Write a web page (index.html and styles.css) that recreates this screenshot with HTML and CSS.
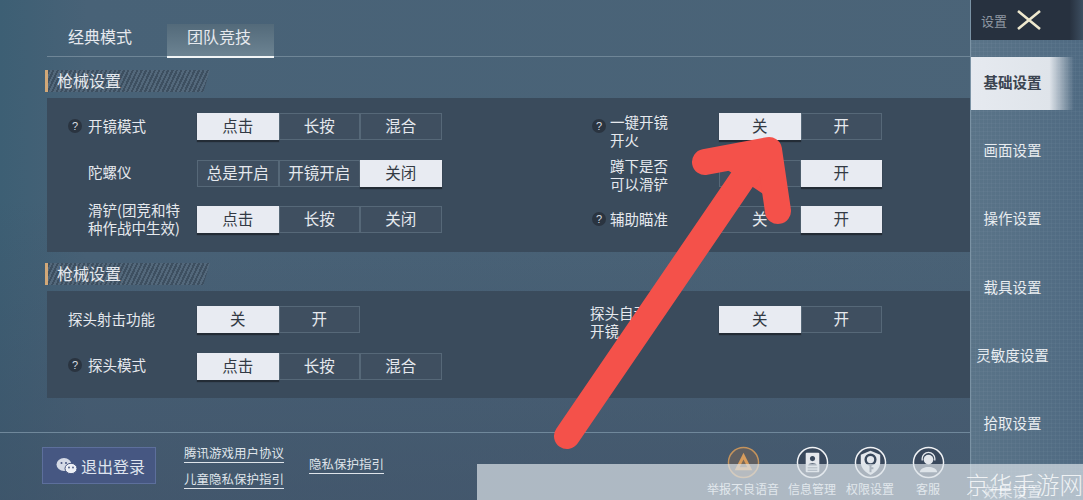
FILE: index.html
```html
<!DOCTYPE html>
<html lang="zh-CN">
<head>
  <meta charset="UTF-8">
  <title>设置</title>
  <link rel="stylesheet" href="styles.css">
</head>
<body>
<div class="screen">
  <div class="main">
    <div class="tabs">
      <div class="tab">经典模式</div>
      <div class="tab active">团队竞技</div>
    </div>

    <div class="section-title">枪械设置</div>
    <div class="panel first">
      <div class="col">
        <div class="row">
          <div class="label"><span class="help">?</span>开镜模式</div>
          <div class="seg"><span class="on">点击</span><span>长按</span><span>混合</span></div>
        </div>
        <div class="row">
          <div class="label"><span class="help blank"></span>陀螺仪</div>
          <div class="seg"><span>总是开启</span><span>开镜开启</span><span class="on">关闭</span></div>
        </div>
        <div class="row">
          <div class="label"><span class="help blank"></span><span>滑铲(团竞和特<br>种作战中生效)</span></div>
          <div class="seg"><span class="on">点击</span><span>长按</span><span>关闭</span></div>
        </div>
      </div>
      <div class="col right">
        <div class="row">
          <div class="label"><span class="help">?</span><span class="low">一键开镜<br>开火</span></div>
          <div class="seg"><span class="on">关</span><span>开</span></div>
        </div>
        <div class="row">
          <div class="label"><span class="help blank"></span><span class="lower">蹲下是否<br>可以滑铲</span></div>
          <div class="seg"><span>关</span><span class="on">开</span></div>
        </div>
        <div class="row">
          <div class="label"><span class="help">?</span>辅助瞄准</div>
          <div class="seg"><span>关</span><span class="on">开</span></div>
        </div>
      </div>
    </div>

    <div class="section-title second">枪械设置</div>
    <div class="panel">
      <div class="col">
        <div class="row">
          <div class="label">探头射击功能</div>
          <div class="seg"><span class="on">关</span><span>开</span></div>
        </div>
        <div class="row">
          <div class="label"><span class="help">?</span>探头模式</div>
          <div class="seg"><span class="on">点击</span><span>长按</span><span>混合</span></div>
        </div>
      </div>
      <div class="col right">
        <div class="row">
          <div class="label flush"><span class="lower">探头自动<br>开镜</span></div>
          <div class="seg"><span class="on">关</span><span>开</span></div>
        </div>
      </div>
    </div>

    <div class="footer">
      <div class="logout">
        <svg class="wechat" viewBox="0 0 22 18">
          <ellipse cx="8" cy="7.5" rx="7.5" ry="6.5" fill="#d5dae6"/>
          <ellipse cx="15" cy="11.5" rx="6" ry="5.2" fill="#eef0f5" stroke="#46557f"/>
          <circle cx="5.5" cy="6" r="1" fill="#46557f"/>
          <circle cx="10" cy="6" r="1" fill="#46557f"/>
          <circle cx="13" cy="10.5" r=".9" fill="#46557f"/>
          <circle cx="17" cy="10.5" r=".9" fill="#46557f"/>
        </svg>
        退出登录
      </div>
      <div class="links">
        <a>腾讯游戏用户协议</a>
        <a>儿童隐私保护指引</a>
      </div>
      <a class="privacy">隐私保护指引</a>
      <div class="actions">
        <div class="action wide">
          <svg viewBox="0 0 34 34">
            <circle cx="17" cy="17" r="15.5" fill="#5f5f62" stroke="#c4935c" stroke-width="1.5"/>
            <path d="M17 7 L26 25 H8 Z" fill="#d89c5c"/>
            <path d="M17 14 L21 22 H13 Z" fill="#7b6a58"/>
          </svg>
          <span>举报不良语音</span>
        </div>
        <div class="action">
          <svg viewBox="0 0 34 34">
            <circle cx="17" cy="17" r="15.5" fill="#39485c" stroke="#f0f2f5" stroke-width="1.5"/>
            <rect x="10" y="7" width="14" height="20" rx="1" fill="#e4e7ec"/>
            <circle cx="17" cy="13" r="2.6" fill="#39485c"/>
            <path d="M12.5 20 c0 -3 9 -3 9 0 Z" fill="#39485c"/>
            <path d="M12 22.5 H22 M12 25 H22" stroke="#39485c"/>
          </svg>
          <span>信息管理</span>
        </div>
        <div class="action">
          <svg viewBox="0 0 34 34">
            <circle cx="17" cy="17" r="15.5" fill="#39485c" stroke="#f0f2f5" stroke-width="1.5"/>
            <path d="M17 5 L27 9 V17 C27 23 22 27 17 30 C12 27 7 23 7 17 V9 Z" fill="#e4e7ec"/>
            <circle cx="17" cy="14" r="5" fill="#e4e7ec" stroke="#39485c" stroke-width="2.5"/>
            <path d="M17 19 V27 M17 23 H20" stroke="#39485c" stroke-width="2"/>
          </svg>
          <span>权限设置</span>
        </div>
        <div class="action">
          <svg viewBox="0 0 34 34">
            <circle cx="17" cy="17" r="15.5" fill="#39485c" stroke="#f0f2f5" stroke-width="1.5"/>
            <circle cx="17" cy="14" r="5" fill="#e4e7ec"/>
            <path d="M10.5 15 V13 A6.5 6.5 0 0 1 23.5 13 V15" fill="none" stroke="#e4e7ec" stroke-width="1.4"/>
            <path d="M8 27 C9 20 25 20 26 27 Z" fill="#e4e7ec"/>
          </svg>
          <span>客服</span>
        </div>
      </div>
    </div>
  </div>

  <div class="side">
    <div class="side-top">
      <span>设置</span>
      <svg class="close" viewBox="0 0 24 20">
        <path d="M1 1 L23 19 M23 1 L1 19" stroke="#efe9cf" stroke-width="2.6"/>
      </svg>
    </div>
    <div class="side-item active">基础设置</div>
    <div class="side-item">画面设置</div>
    <div class="side-item">操作设置</div>
    <div class="side-item">载具设置</div>
    <div class="side-item">灵敏度设置</div>
    <div class="side-item">拾取设置</div>
    <div class="side-item">效果设置</div>
  </div>

  <div class="watermark">京华手游网</div>

  <svg class="arrow" viewBox="0 0 1083 500">
    <path d="M720 165 L770 150 L772 200 Z" fill="#f4514a"/>
    <path d="M567 436 L752 165 M705 162 L769 150 L778 211" fill="none" stroke="#f4514a" stroke-width="26" stroke-linecap="round" stroke-linejoin="round"/>
  </svg>
</div>
</body>
</html>
```

FILE: styles.css
```css
* { box-sizing: border-box; }
html, body { margin: 0; height: 500px; overflow: hidden; }
body { font-family: "Noto Sans CJK SC", "Liberation Sans", sans-serif; color: #e6e9ee; }

.screen {
  position: relative;
  display: flex;
  width: 1083px;
  height: 500px;
  overflow: hidden;
  background:
    linear-gradient(rgba(62, 78, 100, 0) 40%, rgba(62, 78, 100, 0.55) 100%),
    linear-gradient(90deg, #3d5f74 0%, #486277 8%, #4b6478 100%);
}

.main { width: 970px; flex: none; }

.tabs {
  display: flex;
  height: 57px;
  margin-left: 47px;
  padding-top: 24px;
  border-bottom: 1px solid #6f8697;
}
.tab {
  width: 108px;
  height: 33px;
  margin-right: 12px;
  padding-left: 21px;
  font-size: 16px;
  line-height: 24px;
}
.tab.active {
  width: 107px;
  height: 34px;
  padding-left: 20px;
  background: linear-gradient(#536a7a, #6c8392);
  border-bottom: 2px solid #f2f5f6;
}

.section-title {
  width: 165px;
  height: 22px;
  margin: 13px 0 0 45px;
  padding-left: 9px;
  font-size: 16px;
  line-height: 20px;
  background: repeating-linear-gradient(115deg, #3d4f60 0 2px, #53687b 2px 4px);
  clip-path: polygon(0 0, 100% 0, 96% 100%, 0 100%);
  border-left: 3px solid #d2a878;
}
.section-title.second { margin-top: 11px; margin-bottom: 1px; }

.panel {
  display: flex;
  height: 107px;
  margin: 6px 0 0 47px;
  background: #3a4b5c;
}
.panel.first { height: 154px; }

.col { display: flex; flex-direction: column; gap: 19.5px; width: 461px; flex: none; padding: 15px 0 0 21px; }
.col.right { width: 462px; padding-left: 84px; }

.row { display: flex; align-items: center; height: 27px; }

.label {
  display: flex;
  align-items: center;
  width: 129px;
  padding-bottom: 2px;
  font-size: 14.5px;
  line-height: 18px;
  flex: none;
}
.col.right .label { width: 127px; }
.col.right .label.flush { width: 129px; margin-left: -2px; }
.low { margin-top: 10px; }
.lower { margin-top: 6px; }

.help {
  width: 14px;
  height: 14px;
  margin-right: 6px;
  flex: none;
  border-radius: 50%;
  background: #2a3440;
  color: #d8dde2;
  font-family: "Liberation Sans", sans-serif;
  font-size: 11px;
  line-height: 14px;
  text-align: center;
}
.col.right .help { margin-right: 4px; }
.help.blank { background: none; }

.seg { display: flex; }
.seg span {
  width: 81.5px;
  height: 27px;
  border: 1px solid #566878;
  background: #3f4f60;
  font-size: 15.5px;
  line-height: 23px;
  text-align: center;
}
.seg span.on {
  border-color: #e8ebf2;
  background: #e8ebf2;
  color: #333a44;
  box-shadow: 0 2px 1px #232c36;
}

.footer {
  display: flex;
  position: relative;
  height: 67px;
  margin-top: 34px;
  padding: 14px 0 0 42px;
  border-top: 1px solid #70889b;
}
.logout {
  display: flex;
  align-items: center;
  gap: 3px;
  width: 114px;
  height: 37px;
  padding-left: 13px;
  background: #465782;
  border: 1px solid #5d6f9c;
  font-size: 16px;
  color: #dfe4ee;
}
.wechat { width: 22px; height: 18px; }

.links {
  display: flex;
  flex-direction: column;
  gap: 7px;
  margin: -3px 0 0 28px;
}
.links a, .privacy {
  font-size: 12.5px;
  line-height: 18px;
  height: 19px;
  border-bottom: 1px solid #dfe4ea;
  color: #dfe4ea;
}
.privacy { align-self: flex-start; margin: 8px 0 0 25px; }

.actions { display: flex; position: absolute; right: 13px; top: 13px; }
.action {
  display: flex;
  flex-direction: column;
  align-items: center;
  width: 58px;
  font-size: 12px;
  line-height: 16px;
  color: #eef1f4;
  white-space: nowrap;
}
.action.wide { width: 80px; }
.action svg { width: 33px; height: 33px; margin-bottom: 2px; flex: none; }

.side {
  width: 113px;
  flex: none;
  background:
    repeating-linear-gradient(90deg, rgba(255, 255, 255, 0.03) 0 1px, transparent 1px 4px),
    repeating-linear-gradient(0deg, rgba(255, 255, 255, 0.03) 0 1px, transparent 1px 4px),
    linear-gradient(90deg, #5a7488, #4f6a82);
  border-left: 1px solid #7b93a5;
}
.side-top {
  display: flex;
  align-items: center;
  gap: 10px;
  height: 40px;
  padding-left: 10px;
  background: linear-gradient(90deg, #27313f 88%, #3d4e60 100%);
  color: #8f98a2;
  font-size: 13px;
}
.close { width: 24px; height: 20px; }

.side-item {
  height: 68.3px;
  padding-right: 29px;
  font-size: 14.5px;
  line-height: 68px;
  text-align: center;
  color: #e8ecf0;
  white-space: nowrap;
}
.side-item.active {
  height: 53px;
  margin: 17px 0 6px;
  line-height: 50px;
  background: linear-gradient(90deg, #e6eaf0 0%, #dfe4ea 70%, rgba(223, 228, 234, 0) 92%);
  color: #3b4450;
  font-weight: 700;
}

.watermark {
  position: absolute;
  left: 477px;
  top: 464px;
  width: 606px;
  height: 36px;
  background: rgba(220, 226, 232, 0.7);
  text-align: right;
  font-size: 23.5px;
  line-height: 40px;
  font-weight: 300;
  color: rgba(255, 255, 255, 0.8);
}

.arrow { position: absolute; left: 0; top: 0; width: 1083px; height: 500px; pointer-events: none; }
```
